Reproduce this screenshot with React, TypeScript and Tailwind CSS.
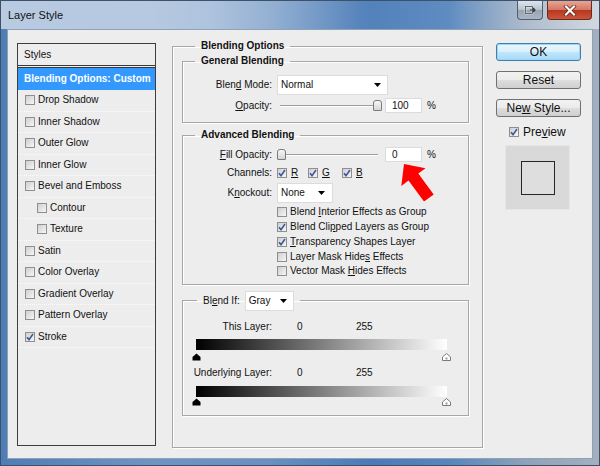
import React from 'react'

function Check({ checked = false }: { checked?: boolean }) {
  return (
    <span className="w-[10px] h-[10px] shrink-0 border border-[#8f8f8f] bg-[linear-gradient(135deg,#cfcfcf,#f6f6f6)] flex items-center justify-center">
      {checked && (
        <svg width="8" height="8" viewBox="0 0 8 8">
          <path d="M1 4.2 L3 6.6 L7 1" fill="none" stroke="#3b5a99" strokeWidth="1.6" />
        </svg>
      )}
    </span>
  )
}

function Caret() {
  return (
    <svg width="7" height="4" viewBox="0 0 7 4">
      <path d="M0 0h7L3.5 4z" fill="#000" />
    </svg>
  )
}

function Thumb() {
  return <span className="block w-[9px] h-[11px] rounded-t-[3px] rounded-b-[1px] border border-[#7b7b7b] bg-[linear-gradient(to_bottom,#f7f7f7,#d6d6d6)]" />
}

function Slider({ atEnd }: { atEnd: boolean }) {
  return (
    <div className="relative w-[108px] h-[15px] flex items-center">
      <div className="ml-[3px] mr-[7px] flex-1 h-[2px] border-t border-[#9c9c9c] border-b border-b-white" />
      <div className={atEnd ? 'absolute top-[2px] left-[96px]' : 'absolute top-[2px] left-0'}>
        <Thumb />
      </div>
    </div>
  )
}

function Marker({ dark }: { dark: boolean }) {
  return dark ? (
    <svg width="9" height="8" viewBox="0 0 9 8">
      <path d="M4.5 0.5 L8.5 4 V7.5 H0.5 V4 Z" fill="#000" />
    </svg>
  ) : (
    <svg width="9" height="8" viewBox="0 0 9 8">
      <path d="M4.5 0.5 L8.5 4 V7.5 H0.5 V4 Z" fill="#fff" stroke="#7a7a7a" />
      <rect x="3.5" y="4.5" width="2" height="2" fill="#9a9a9a" />
    </svg>
  )
}

const styleRows: { label: string; sub?: boolean; checked?: boolean }[] = [
  { label: 'Drop Shadow' },
  { label: 'Inner Shadow' },
  { label: 'Outer Glow' },
  { label: 'Inner Glow' },
  { label: 'Bevel and Emboss' },
  { label: 'Contour', sub: true },
  { label: 'Texture', sub: true },
  { label: 'Satin' },
  { label: 'Color Overlay' },
  { label: 'Gradient Overlay' },
  { label: 'Pattern Overlay' },
  { label: 'Stroke', checked: true },
]

const advChecks: { label: React.ReactNode; checked: boolean }[] = [
  { label: <>Blend <u>I</u>nterior Effects as Group</>, checked: false },
  { label: <>Blend Cli<u>p</u>ped Layers as Group</>, checked: true },
  { label: <><u>T</u>ransparency Shapes Layer</>, checked: true },
  { label: <>Layer Mask Hide<u>s</u> Effects</>, checked: false },
  { label: <>Vector Mask <u>H</u>ides Effects</>, checked: false },
]

const groupBorder = 'border border-[#a7a7a7] shadow-[inset_1px_1px_0_#fff,1px_1px_0_#fff]'

export default function App() {
  return (
    <div className="relative w-[600px] h-[466px] overflow-hidden flex flex-col border border-[#3f5168] bg-[linear-gradient(to_right,#4f7db5_0%,#6f94c2_25%,#6890c1_45%,#4a7bb7_62%,#5686be_75%,#8fa2b8_88%,#a3b0bf_100%)] font-['Liberation_Sans',Arial,sans-serif] text-[#111]">
      {/* title bar */}
      <div className="h-[28px] shrink-0 flex items-start pl-[7px] pr-[7px] bg-[linear-gradient(to_right,rgba(255,255,255,0.6),rgba(255,255,255,0.45)_35%,rgba(255,255,255,0.05)_60%,rgba(255,255,255,0.05)_75%,rgba(255,255,255,0.5)_100%)]">
        <div className="h-[28px] flex items-center text-[11px] text-[#111]">Layer Style</div>
        <div className="ml-auto flex gap-[4px]">
          <div className="w-[26px] h-[19px] rounded-b-[4px] border border-t-0 border-[#4e5e70] bg-[linear-gradient(to_bottom,#dfe5ec,#b7c1cc_50%,#98a4b2_52%,#aab6c3)] flex items-center justify-center">
            <svg width="13" height="10" viewBox="0 0 13 10">
              <rect x="1.5" y="1.5" width="7" height="7" fill="none" stroke="#fff" strokeWidth="1.5" />
              <rect x="1.5" y="1.5" width="7" height="7" fill="none" stroke="#3a4450" strokeWidth="0.8" />
              <path d="M6 5h5M9 3l2 2-2 2" fill="none" stroke="#2e3640" strokeWidth="1.2" />
            </svg>
          </div>
          <div className="w-[45px] h-[19px] rounded-b-[4px] border border-t-0 border-[#6b2a20] bg-[linear-gradient(to_bottom,#e9a493,#d57765_48%,#b8371f_52%,#c9563c)] flex items-center justify-center">
            <svg width="14" height="11" viewBox="0 0 14 11">
              <path d="M3 1.5 L11 9.5 M11 1.5 L3 9.5" stroke="#5a1a10" strokeWidth="3.6" strokeLinecap="square" />
              <path d="M3 1.5 L11 9.5 M11 1.5 L3 9.5" stroke="#fff" strokeWidth="2.2" strokeLinecap="square" />
            </svg>
          </div>
        </div>
      </div>

      {/* client area */}
      <div className="mx-[6px] h-[430px] border border-[#8ea2b8] bg-[#ededed] flex items-start text-[10px] leading-[12px]">
        {/* styles list */}
        <div className="ml-[9px] mt-[13px] w-[139px] h-[403px] border border-[#3e3e3e] flex flex-col">
          <div className="h-[21px] flex items-center pl-[6px]">Styles</div>
          <div className="h-[3px] border-y border-[#3a3a3a]" />
          <div className="h-[22px] flex items-center pl-[6px] bg-[#3399ff] text-white font-bold">Blending Options: Custom</div>
          {styleRows.map((r) => (
            <div key={r.label} className={`h-[21.5px] flex items-center gap-[3px] border-b border-dotted border-[#fbfbfb] ${r.sub ? 'pl-[19px]' : 'pl-[7px]'}`}>
              <Check checked={r.checked} />
              <span>{r.label}</span>
            </div>
          ))}
        </div>

        {/* blending options */}
        <fieldset className={`ml-[16px] mt-[10px] w-[311px] pl-[9px] pb-[31px] ${groupBorder}`}>
          <legend className="ml-[13px] px-[6px] font-bold">Blending Options</legend>

          <fieldset className={`mt-[3px] w-[287px] pb-[9px] ${groupBorder}`}>
            <legend className="ml-[12px] px-[6px] font-bold">General Blending</legend>
            <div className="mt-[8px] flex items-center">
              <span className="w-[89px] text-right">Blen<u>d</u> Mode:</span>
              <div className="ml-[5px] w-[111px] h-[20px] bg-white border border-[#dcdcdc] flex items-center justify-between pl-[3px] pr-[6px]">
                <span>Normal</span>
                <Caret />
              </div>
            </div>
            <div className="mt-[3px] h-[15px] flex items-center">
              <span className="w-[89px] text-right"><u>O</u>pacity:</span>
              <div className="ml-[5px]"><Slider atEnd /></div>
              <div className="w-[37px] h-[15px] bg-white border border-[#dcdcdc] pl-[6px] flex items-center">100</div>
              <span className="ml-[5px]">%</span>
            </div>
          </fieldset>

          <fieldset className={`mt-[6px] w-[287px] pb-[5px] ${groupBorder}`}>
            <legend className="ml-[12px] px-[6px] font-bold">Advanced Blending</legend>
            <div className="mt-[6px] h-[15px] flex items-center">
              <span className="w-[89px] text-right"><u>F</u>ill Opacity:</span>
              <div className="ml-[5px]"><Slider atEnd={false} /></div>
              <div className="w-[37px] h-[15px] bg-white border border-[#dcdcdc] pl-[6px] flex items-center">0</div>
              <span className="ml-[5px]">%</span>
            </div>
            <div className="mt-[4px] h-[14px] flex items-center">
              <span className="w-[89px] text-right">Channels:</span>
              <div className="ml-[5px] w-[31px] flex items-center gap-[4px]"><Check checked /><u>R</u></div>
              <div className="w-[34px] flex items-center gap-[4px]"><Check checked /><u>G</u></div>
              <div className="flex items-center gap-[4px]"><Check checked /><u>B</u></div>
            </div>
            <div className="mt-[3px] flex items-center">
              <span className="w-[89px] text-right">K<u>n</u>ockout:</span>
              <div className="ml-[5px] w-[56px] h-[20px] bg-white border border-[#dcdcdc] flex items-center justify-between pl-[3px] pr-[7px]">
                <span>None</span>
                <Caret />
              </div>
            </div>
            <div className="mt-[2px] pl-[94px] flex flex-col">
              {advChecks.map((c, i) => (
                <div key={i} className="h-[14.75px] flex items-center gap-[3px]">
                  <Check checked={c.checked} />
                  <span>{c.label}</span>
                </div>
              ))}
            </div>
          </fieldset>

          <fieldset className={`mt-[6px] w-[287px] pb-[9px] ${groupBorder}`}>
            <legend className="ml-[14px] px-[6px]">
              <div className="h-[20px] flex items-center">
                <span>Bl<u>e</u>nd If:</span>
                <div className="ml-[5px] w-[49px] h-[20px] bg-white border border-[#dcdcdc] flex items-center justify-between pl-[3px] pr-[6px]">
                  <span>Gray</span>
                  <Caret />
                </div>
              </div>
            </legend>
            <div className="mt-[10px] h-[12px] flex items-center">
              <span className="w-[89px] text-right">This Layer:</span>
              <span className="ml-[25px] w-[59px]">0</span>
              <span>255</span>
            </div>
            <div className="mt-[6px] ml-[13px] w-[251px] h-[11px] bg-[linear-gradient(to_right,#000,#fff)]" />
            <div className="mt-[3px] ml-[9px] w-[259px] h-[8px] flex justify-between">
              <Marker dark />
              <Marker dark={false} />
            </div>
            <div className="mt-[6px] h-[12px] flex items-center">
              <span className="w-[89px] text-right">Underlying Layer:</span>
              <span className="ml-[25px] w-[59px]">0</span>
              <span>255</span>
            </div>
            <div className="mt-[7px] ml-[13px] w-[251px] h-[11px] bg-[linear-gradient(to_right,#000,#fff)]" />
            <div className="mt-[1px] ml-[9px] w-[259px] h-[8px] flex justify-between">
              <Marker dark />
              <Marker dark={false} />
            </div>
          </fieldset>
        </fieldset>

        {/* buttons */}
        <div className="ml-[13px] mt-[13px] w-[85px] flex flex-col text-[12px] leading-[14px]">
          <button className="h-[18px] rounded-[3px] border border-[#3c7fb1] bg-[linear-gradient(to_bottom,#eaf6fd,#d9f0fc_50%,#bee6fd_52%,#a7d9f5)] shadow-[inset_0_0_0_1px_#9fd6f6]">OK</button>
          <button className="mt-[10px] h-[18px] rounded-[3px] border border-[#707070] bg-[linear-gradient(to_bottom,#f2f2f2,#ebebeb_50%,#dddddd_52%,#cfcfcf)]">Reset</button>
          <button className="mt-[10px] h-[18px] rounded-[3px] border border-[#707070] bg-[linear-gradient(to_bottom,#f2f2f2,#ebebeb_50%,#dddddd_52%,#cfcfcf)]">Ne<u>w</u> Style...</button>
          <div className="mt-[9px] h-[12px] pl-[13px] flex items-center gap-[4px]">
            <Check checked />
            <span>Pre<u>v</u>iew</span>
          </div>
          <div className="mt-[7px] ml-[9px] w-[65px] h-[65px] bg-[#d9d9d9] border border-[#e6e6e6] flex items-center justify-center">
            <div className="w-[34px] h-[34px] border border-[#262626] bg-[#dedede]" />
          </div>
        </div>
      </div>

      {/* red arrow annotation */}
      <svg className="absolute left-[398px] top-[160px]" width="40" height="44" viewBox="0 0 40 44">
        <polygon points="5,3 26.5,7.2 19.3,12.5 34.7,33.5 25,40.5 9.5,19.5 2.3,25" fill="#ff0000" />
      </svg>
    </div>
  )
}
